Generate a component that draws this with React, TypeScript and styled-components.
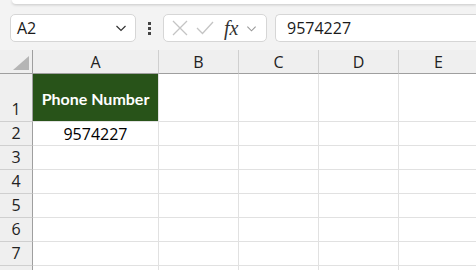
import React from 'react'
import styled, { createGlobalStyle } from 'styled-components'

const GlobalStyle = createGlobalStyle`
  html, body {
    margin: 0;
    padding: 0;
    background: #f3f3f3;
    overflow: hidden;
  }
  body {
    font-family: 'Open Sans', 'Liberation Sans', sans-serif;
  }
`

const Page = styled.div`
  width: 476px;
  height: 270px;
  overflow: hidden;
  background: #f3f3f3;
`

const RibbonEdge = styled.div`
  height: 4px;
  margin-left: 12px;
  background: #ffffff;
  border-radius: 0 0 0 8px;
  box-shadow: 0 1px 3px rgba(0, 0, 0, 0.18);
`

const FormulaBar = styled.div`
  display: flex;
  align-items: center;
  height: 28px;
  padding: 10px 0 8px 10px;
`

const Box = styled.div`
  display: flex;
  align-items: center;
  height: 28px;
  box-sizing: border-box;
  background: #ffffff;
  border: 1px solid #d6d6d6;
  border-radius: 5px;
`

const NameBox = styled(Box)`
  width: 126px;
  padding: 0 8px 0 6px;
  justify-content: space-between;
  font-size: 16px;
  color: #1a1a1a;
`

const Kebab = styled.div`
  width: 27px;
  display: flex;
  flex-direction: column;
  align-items: center;
  gap: 2px;
`

const Dot = styled.span`
  width: 3px;
  height: 3px;
  background: #444;
`

const FnBox = styled(Box)`
  width: 104px;
  padding: 0 4px 0 8px;
  gap: 8px;
`

const FxText = styled.span`
  font-family: 'Liberation Serif', serif;
  font-style: italic;
  font-size: 20px;
  color: #333;
  margin-left: 2px;
`

const InputBox = styled(Box)`
  flex: 1;
  margin-left: 8px;
  padding-left: 11px;
  border-right: none;
  border-radius: 5px 0 0 5px;
  font-size: 16px;
  color: #1a1a1a;
`

const Grid = styled.div`
  display: grid;
  grid-template-columns: 33px 126px repeat(4, 80px);
  grid-template-rows: 24px 48px repeat(7, 24px) 8px;
  background: #ffffff;
`

const Corner = styled.div`
  background: #efefef;
  border-right: 1px solid #9f9f9f;
  border-bottom: 1px solid #9f9f9f;
  position: relative;
`

const ColHead = styled.div`
  background: #efefef;
  border-right: 1px solid #cfcfcf;
  border-bottom: 1px solid #9f9f9f;
  display: flex;
  align-items: center;
  justify-content: center;
  font-size: 16px;
  color: #222;
`

const RowHead = styled.div`
  background: #efefef;
  border-right: 1px solid #9f9f9f;
  border-bottom: 1px solid #cfcfcf;
  display: flex;
  align-items: flex-end;
  justify-content: center;
  padding-bottom: 1px;
  font-size: 16px;
  line-height: 22px;
  color: #222;
  overflow: hidden;
`

const Cell = styled.div<{ $header?: boolean }>`
  border-right: 1px solid #e1e1e1;
  border-bottom: 1px solid #e1e1e1;
  display: flex;
  align-items: center;
  justify-content: center;
  font-size: 16px;
  color: #000;
  background: ${p => (p.$header ? '#285319' : '#ffffff')};
  ${p =>
    p.$header &&
    'color: #ffffff; font-weight: 700; font-size: 16px; font-family: "Lato", "Open Sans", sans-serif; padding-top: 2px;'}
`

const COLS = ['A', 'B', 'C', 'D', 'E']
const ROWS = [1, 2, 3, 4, 5, 6, 7]

const Chevron = ({ color = '#333', size = 12 }: { color?: string; size?: number }) => (
  <svg width={size} height={size} viewBox="0 0 12 12">
    <path d="M1.5 4 L6 8.5 L10.5 4" fill="none" stroke={color} strokeWidth="1.2" />
  </svg>
)

const App: React.FC = () => {
  const cellValue = (row: number, col: string) => {
    if (col !== 'A') return ''
    if (row === 1) return 'Phone Number'
    if (row === 2) return '9574227'
    return ''
  }

  return (
    <Page>
      <GlobalStyle />
      <RibbonEdge />
      <FormulaBar>
        <NameBox>
          <span>A2</span>
          <Chevron />
        </NameBox>
        <Kebab>
          <Dot />
          <Dot />
          <Dot />
        </Kebab>
        <FnBox>
          <svg width="16" height="16" viewBox="0 0 16 16">
            <path d="M1 1 L15 15 M15 1 L1 15" stroke="#c4c4c4" strokeWidth="1.3" fill="none" />
          </svg>
          <svg width="18" height="16" viewBox="0 0 18 16">
            <path d="M1 8 L6.5 13.5 L17 2" stroke="#c4c4c4" strokeWidth="1.3" fill="none" />
          </svg>
          <FxText>fx</FxText>
          <Chevron color="#999" size={11} />
        </FnBox>
        <InputBox>9574227</InputBox>
      </FormulaBar>
      <Grid>
        <Corner>
          <svg
            width="16"
            height="14"
            viewBox="0 0 16 14"
            style={{ position: 'absolute', right: 3, bottom: 3 }}
          >
            <path d="M16 0 L16 14 L0 14 Z" fill="#b5b5b5" />
          </svg>
        </Corner>
        {COLS.map(c => (
          <ColHead key={c}>{c}</ColHead>
        ))}
        {ROWS.map(r => (
          <React.Fragment key={r}>
            <RowHead>{r}</RowHead>
            {COLS.map(c => (
              <Cell key={c} $header={r === 1 && c === 'A'}>
                {cellValue(r, c)}
              </Cell>
            ))}
          </React.Fragment>
        ))}
        <RowHead />
        {COLS.map(c => (
          <Cell key={`filler-${c}`} />
        ))}
      </Grid>
    </Page>
  )
}

export default App
